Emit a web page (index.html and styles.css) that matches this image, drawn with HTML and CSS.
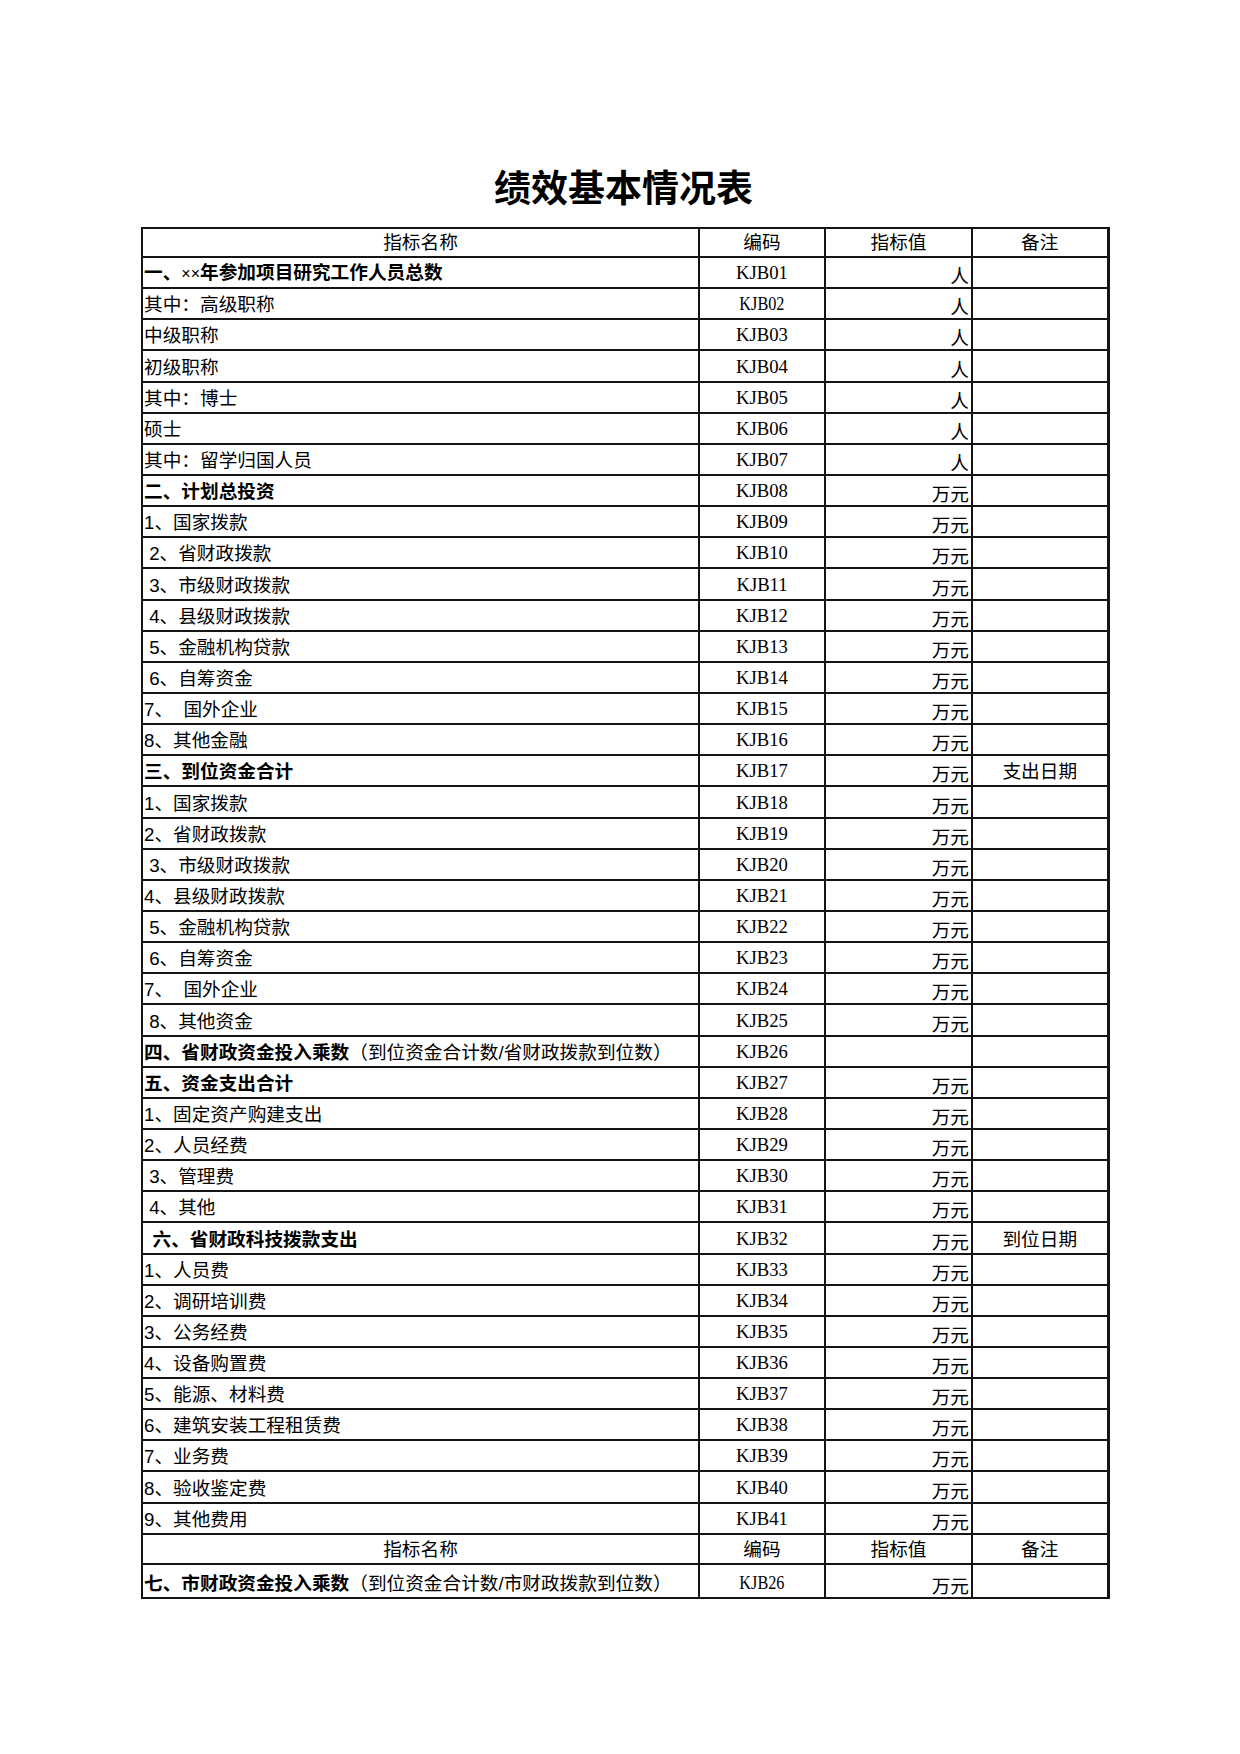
FILE: index.html
```html
<!DOCTYPE html>
<html lang="zh-CN">
<head>
<meta charset="utf-8">
<title>绩效基本情况表</title>
<link rel="stylesheet" href="styles.css">
</head>
<body>
<div class="page">
  <h1 class="title">绩效基本情况表</h1>
  <table class="sheet">
    <colgroup>
      <col class="c-name"><col class="c-code"><col class="c-val"><col class="c-note">
    </colgroup>
    <tbody>
      <tr class="hd"><td class="ctr">指标名称</td><td class="ctr">编码</td><td class="ctr">指标值</td><td class="ctr">备注</td></tr>
      <tr><td class="name"><b>一、<span class="x">××</span>年参加项目研究工作人员总数</b></td><td class="code">KJB01</td><td class="unit">人</td><td></td></tr>
      <tr><td class="name">其中：高级职称</td><td class="code"><span class="ss">KJB02</span></td><td class="unit">人</td><td></td></tr>
      <tr><td class="name">中级职称</td><td class="code">KJB03</td><td class="unit">人</td><td></td></tr>
      <tr><td class="name">初级职称</td><td class="code">KJB04</td><td class="unit">人</td><td></td></tr>
      <tr><td class="name">其中：博士</td><td class="code">KJB05</td><td class="unit">人</td><td></td></tr>
      <tr><td class="name">硕士</td><td class="code">KJB06</td><td class="unit">人</td><td></td></tr>
      <tr><td class="name">其中：留学归国人员</td><td class="code">KJB07</td><td class="unit">人</td><td></td></tr>
      <tr><td class="name"><b>二、计划总投资</b></td><td class="code">KJB08</td><td class="unit">万元</td><td></td></tr>
      <tr><td class="name">1、国家拨款</td><td class="code">KJB09</td><td class="unit">万元</td><td></td></tr>
      <tr><td class="name"> 2、省财政拨款</td><td class="code">KJB10</td><td class="unit">万元</td><td></td></tr>
      <tr><td class="name"> 3、市级财政拨款</td><td class="code">KJB11</td><td class="unit">万元</td><td></td></tr>
      <tr><td class="name"> 4、县级财政拨款</td><td class="code">KJB12</td><td class="unit">万元</td><td></td></tr>
      <tr><td class="name"> 5、金融机构贷款</td><td class="code">KJB13</td><td class="unit">万元</td><td></td></tr>
      <tr><td class="name"> 6、自筹资金</td><td class="code">KJB14</td><td class="unit">万元</td><td></td></tr>
      <tr><td class="name">7、  国外企业</td><td class="code">KJB15</td><td class="unit">万元</td><td></td></tr>
      <tr><td class="name">8、其他金融</td><td class="code">KJB16</td><td class="unit">万元</td><td></td></tr>
      <tr><td class="name"><b>三、到位资金合计</b></td><td class="code">KJB17</td><td class="unit">万元</td><td class="ctr">支出日期</td></tr>
      <tr><td class="name">1、国家拨款</td><td class="code">KJB18</td><td class="unit">万元</td><td></td></tr>
      <tr><td class="name">2、省财政拨款</td><td class="code">KJB19</td><td class="unit">万元</td><td></td></tr>
      <tr><td class="name"> 3、市级财政拨款</td><td class="code">KJB20</td><td class="unit">万元</td><td></td></tr>
      <tr><td class="name">4、县级财政拨款</td><td class="code">KJB21</td><td class="unit">万元</td><td></td></tr>
      <tr><td class="name"> 5、金融机构贷款</td><td class="code">KJB22</td><td class="unit">万元</td><td></td></tr>
      <tr><td class="name"> 6、自筹资金</td><td class="code">KJB23</td><td class="unit">万元</td><td></td></tr>
      <tr><td class="name">7、  国外企业</td><td class="code">KJB24</td><td class="unit">万元</td><td></td></tr>
      <tr><td class="name"> 8、其他资金</td><td class="code">KJB25</td><td class="unit">万元</td><td></td></tr>
      <tr><td class="name"><b>四、省财政资金投入乘数</b>（到位资金合计数/省财政拨款到位数）</td><td class="code">KJB26</td><td class="unit"></td><td></td></tr>
      <tr><td class="name"><b>五、资金支出合计</b></td><td class="code">KJB27</td><td class="unit">万元</td><td></td></tr>
      <tr><td class="name">1、固定资产购建支出</td><td class="code">KJB28</td><td class="unit">万元</td><td></td></tr>
      <tr><td class="name">2、人员经费</td><td class="code">KJB29</td><td class="unit">万元</td><td></td></tr>
      <tr><td class="name"> 3、管理费</td><td class="code">KJB30</td><td class="unit">万元</td><td></td></tr>
      <tr><td class="name"> 4、其他</td><td class="code">KJB31</td><td class="unit">万元</td><td></td></tr>
      <tr><td class="name"><b>  六、省财政科技拨款支出</b></td><td class="code">KJB32</td><td class="unit">万元</td><td class="ctr">到位日期</td></tr>
      <tr><td class="name">1、人员费</td><td class="code">KJB33</td><td class="unit">万元</td><td></td></tr>
      <tr><td class="name">2、调研培训费</td><td class="code">KJB34</td><td class="unit">万元</td><td></td></tr>
      <tr><td class="name">3、公务经费</td><td class="code">KJB35</td><td class="unit">万元</td><td></td></tr>
      <tr><td class="name">4、设备购置费</td><td class="code">KJB36</td><td class="unit">万元</td><td></td></tr>
      <tr><td class="name">5、能源、材料费</td><td class="code">KJB37</td><td class="unit">万元</td><td></td></tr>
      <tr><td class="name">6、建筑安装工程租赁费</td><td class="code">KJB38</td><td class="unit">万元</td><td></td></tr>
      <tr><td class="name">7、业务费</td><td class="code">KJB39</td><td class="unit">万元</td><td></td></tr>
      <tr><td class="name">8、验收鉴定费</td><td class="code">KJB40</td><td class="unit">万元</td><td></td></tr>
      <tr><td class="name">9、其他费用</td><td class="code">KJB41</td><td class="unit">万元</td><td></td></tr>
      <tr class="hd2"><td class="ctr">指标名称</td><td class="ctr">编码</td><td class="ctr">指标值</td><td class="ctr">备注</td></tr>
      <tr class="last"><td class="name"><b>七、市财政资金投入乘数</b>（到位资金合计数/市财政拨款到位数）</td><td class="code"><span class="ss">KJB26</span></td><td class="unit">万元</td><td></td></tr>
    </tbody>
  </table>
</div>
</body>
</html>
```

FILE: styles.css
```css
html, body {
  margin: 0;
  padding: 0;
  background: #ffffff;
  color: #000000;
}

.page {
  width: 1240px;
  padding-top: 1px;
}

.title {
  margin: 167px 0 0 140px;
  width: 967px;
  text-align: center;
  font-family: "Noto Sans CJK SC", sans-serif;
  font-weight: 700;
  font-size: 37px;
  line-height: 37px;
}

.sheet {
  margin: 22px 0 0 141px;
  width: 966px;
  border-collapse: collapse;
  table-layout: fixed;
  font-family: "Liberation Sans", "Noto Sans CJK SC", sans-serif;
  font-size: 18.67px;
}

.c-name { width: 557px; }
.c-code { width: 126px; }
.c-val { width: 147px; }
.c-note { width: 136px; }

.sheet tr { height: 31.15px; }
.sheet tr.hd { height: 29px; }
.sheet tr.hd2 { height: 30px; }
.sheet tr.last { height: 34px; }

.sheet td {
  border: 2px solid #151515;
  padding: 0 2px 2px 2px;
  vertical-align: bottom;
  line-height: 22px;
  white-space: pre;
  overflow: hidden;
}

.sheet td:last-child { border-right-width: 3px; }

.sheet td.ctr {
  text-align: center;
}

.sheet td.name {
  text-align: left;
  padding-left: 1px;
}

.sheet td.name b {
  font-weight: 700;
  font-family: "Noto Sans CJK SC", sans-serif;
}

.sheet .x {
  font-family: "Liberation Sans", sans-serif;
  font-weight: 400;
  font-size: 16px;
}

.sheet td.code {
  text-align: center;
  font-family: "Liberation Serif", "Noto Sans CJK SC", serif;
  padding-bottom: 3px;
}

.sheet .ss {
  display: inline-block;
  transform: scaleX(0.87);
}

.sheet td.unit {
  text-align: right;
  padding-right: 2px;
  padding-bottom: 1px;
  font-family: "Noto Sans CJK SC", sans-serif;
}
```
